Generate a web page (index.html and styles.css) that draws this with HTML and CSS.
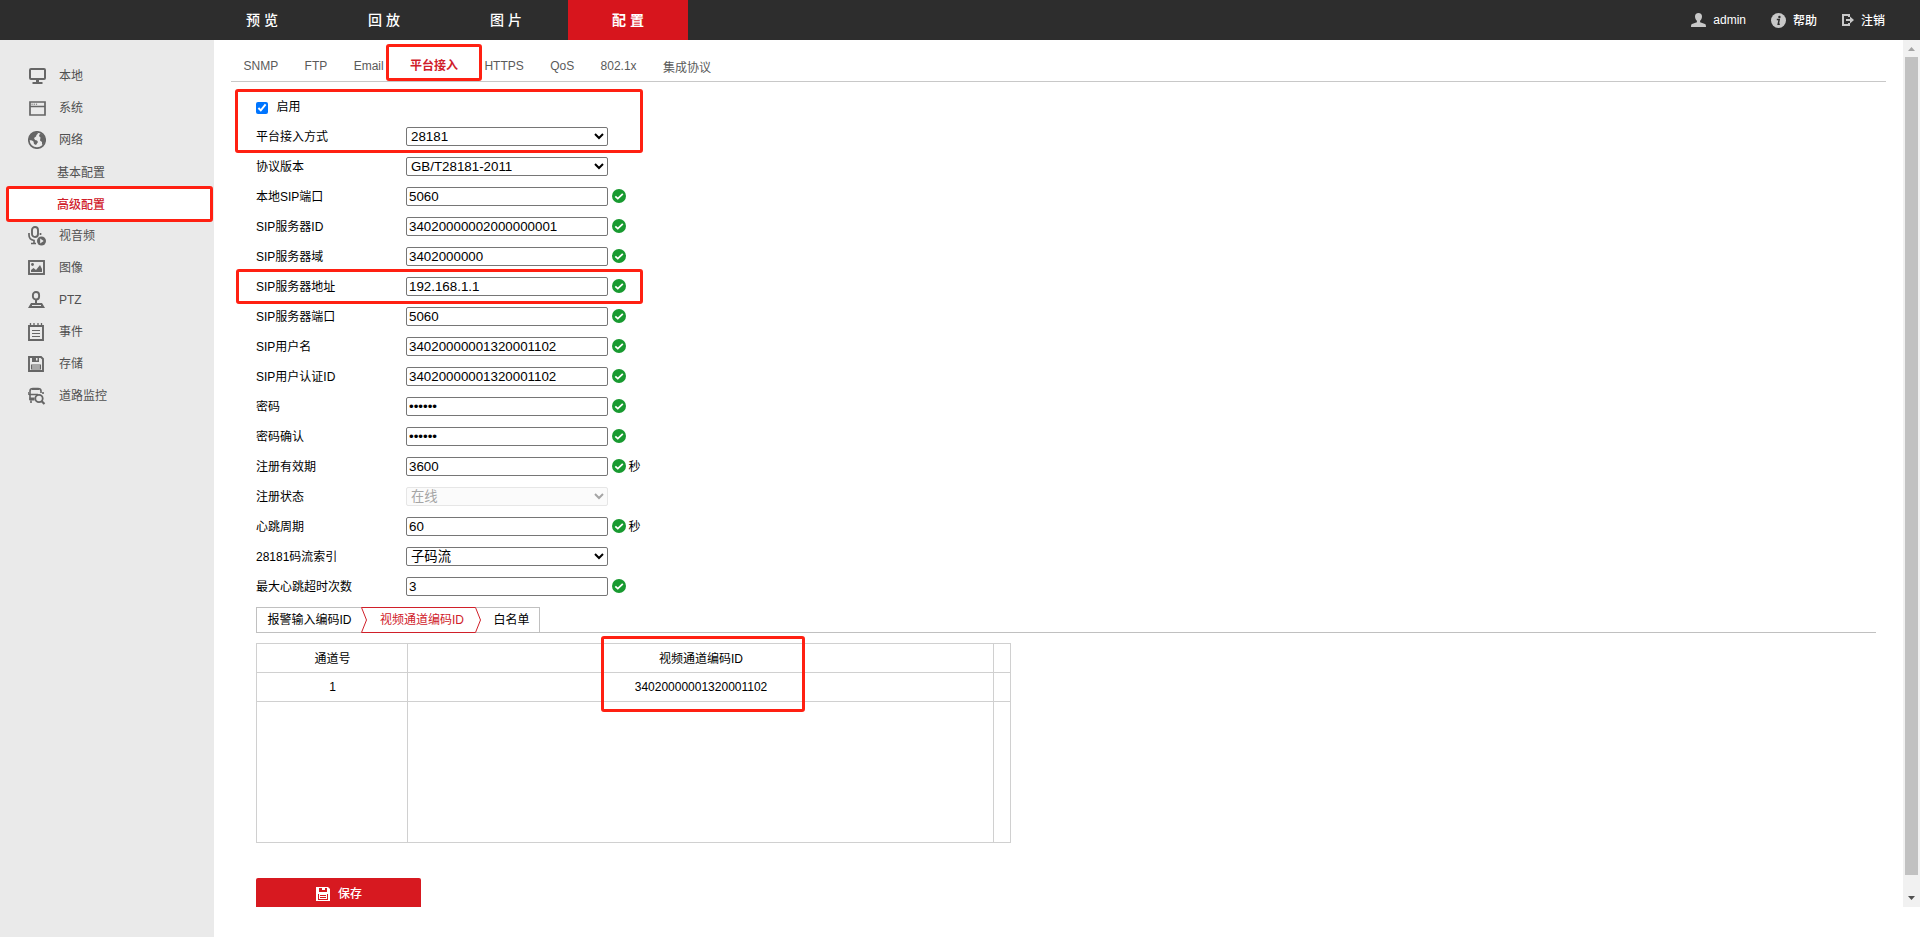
FILE: index.html
```html
<!DOCTYPE html>
<html lang="zh">
<head>
    <meta charset="UTF-8">
    <title>配置</title>
    <link rel="stylesheet" href="styles.css">
</head>
<body>
    <svg class="defs">
        <symbol id="ok" viewBox="0 0 14 14">
            <circle cx="7" cy="7" r="7" fill="#189a30"/>
            <path d="M3.3 7.300l2.500 2.300 5-4.800" fill="none" stroke="#fff" stroke-width="1.800"/>
        </symbol>
    </svg>

    <div class="header">
        <div class="nav">
            <a>预 览</a>
            <a>回 放</a>
            <a>图 片</a>
            <a class="active">配 置</a>
        </div>
        <div class="user">
            <span class="user-item">
                <svg width="15" height="14" viewBox="0 0 15 14"><path fill="#c8c8c8" d="M7.5 0C5.3 0 4 1.500 4 3.500c0 2 .8 3.300 1.900 4.300v1.400L1 11c-.7.300-1 1.200-1 3h15c0-1.800-.3-2.700-1-3L9.100 9.200V7.800C10.200 6.800 11 5.500 11 3.500 11 1.500 9.700 0 7.500 0z"/></svg>
                <span>admin</span>
            </span>
            <span class="user-item help">
                <svg width="15" height="15" viewBox="0 0 15 15"><circle cx="7.5" cy="7.500" r="7.500" fill="#c8c8c8"/><circle cx="8.400" cy="4" r="1.200" fill="#2d2d2d"/><path d="M5.800 6.600h2.400l-1 4.700h1.600" fill="none" stroke="#2d2d2d" stroke-width="1.500"/></svg>
                <span class="cn">帮助</span>
            </span>
            <span class="user-item logout">
                <svg width="12" height="12" viewBox="0 0 12 12"><path d="M7 1H1v10h6M7 0v3M7 9v3" fill="none" stroke="#c8c8c8" stroke-width="2"/><path d="M4 5h4V2.600L12 6 8 9.400V7H4z" fill="#c8c8c8"/></svg>
                <span class="cn">注销</span>
            </span>
        </div>
    </div>

    <div class="body">
        <div class="sidebar">
            <div class="menu">
                <svg viewBox="0 0 18 18"><rect x="2" y="2" width="15" height="10" rx="1" fill="none" stroke="#666" stroke-width="2"/><path d="M8 12h3v3H8zM4.500 15h10v2h-10z" fill="#666"/></svg>
                <span>本地</span>
            </div>
            <div class="menu">
                <svg viewBox="0 0 18 18"><path d="M2 3h15v13H2zM2 7.500h15" fill="none" stroke="#666" stroke-width="1.700"/><path d="M3.500 5.200h6" stroke="#666" stroke-dasharray="1.200 1"/></svg>
                <span>系统</span>
            </div>
            <div class="menu">
                <svg viewBox="0 0 18 18"><circle cx="9" cy="9" r="8.200" fill="none" stroke="#666" stroke-width="1.700"/><path fill="#666" d="M9 1C4 1 1 4.500 1 9l3 .5 1.500 1 .5 2.500 2 1 2-3-1-1.500-2-.5-1-2 2-1.500L8.500 4 10 2.500z"/><path fill="#666" d="M12 2.500l-1 2.500 1.500 1.500-.5 3 2 1.500v3c2-1 3.500-3 3.500-5S15 3 12 2.500z"/></svg>
                <span>网络</span>
            </div>
            <div class="sub">基本配置</div>
            <div class="sub active">高级配置</div>
            <div class="menu">
                <svg class="tall" viewBox="0 0 18 20"><rect x="4" y="1" width="6" height="10" rx="3" fill="none" stroke="#666" stroke-width="1.900"/><path d="M1 7v2c0 3 2 5 5 5.500V18M3 17.500h5M12.500 7v2" fill="none" stroke="#666" stroke-width="1.700"/><circle cx="13.500" cy="15" r="4.500" fill="#666"/><path d="M12.200 12.500l3.500 2.500-3.500 2.500z" fill="#eaeaea"/></svg>
                <span>视音频</span>
            </div>
            <div class="menu">
                <svg viewBox="0 0 18 18"><rect x="1" y="2" width="15" height="13" fill="none" stroke="#666" stroke-width="1.900"/><circle cx="4.500" cy="5.500" r="1.400" fill="#666"/><path d="M3 13v-2l2.500-2L8 11l4-5 2 4v3z" fill="#666"/></svg>
                <span>图像</span>
            </div>
            <div class="menu">
                <svg viewBox="0 0 18 18"><rect x="4.900" y="1" width="6.200" height="7.500" rx="3" fill="none" stroke="#666" stroke-width="1.900"/><path d="M7 9h2v3h5l3 5H0l3-5h4z" fill="#666"/><path d="M4 14.500h9" stroke="#eaeaea"/></svg>
                <span class="en">PTZ</span>
            </div>
            <div class="menu">
                <svg viewBox="0 0 18 18"><path d="M1 3h14v14H1z" fill="none" stroke="#666" stroke-width="1.900"/><path d="M2.500 0v4M6 0v4M10 0v4M13.500 0v4" stroke="#666" stroke-width="1.300"/><path d="M4 7.500h8M4 10.500h8M4 13.500h8" stroke="#666" stroke-width="1.200"/></svg>
                <span>事件</span>
            </div>
            <div class="menu">
                <svg viewBox="0 0 18 18"><path d="M1 2h12l2 2v12H1z" fill="none" stroke="#666" stroke-width="1.900"/><path d="M4 2h7v5H4z" fill="#666"/><path d="M8 3h1.500v2.500H8z" fill="#eaeaea"/><path d="M3.500 10h9v4h-9zM3.500 12h9" fill="none" stroke="#666" stroke-width="1.100"/></svg>
                <span>存储</span>
            </div>
            <div class="menu">
                <svg viewBox="0 0 18 18"><path d="M2 13V4c0-1.500 1-2.500 3-2.500h5c2 0 3 1 3 2.500v2M1 7.500h9M3 13.500v2.500M0 5v3M15 5v2" fill="none" stroke="#666" stroke-width="1.600"/><path d="M1.500 10.500h5v3h-5zM4 1h7v2H4z" fill="#666"/><circle cx="11" cy="11.500" r="3.700" fill="#eaeaea" stroke="#666" stroke-width="1.800"/><path d="M13.500 14l3 3" stroke="#666" stroke-width="2.200"/></svg>
                <span>道路监控</span>
            </div>
            <div class="mark mark-side"></div>
        </div>

        <div class="main">
            <div class="tabs">
                <a>SNMP</a>
                <a>FTP</a>
                <a>Email</a>
                <a class="active">平台接入</a>
                <a>HTTPS</a>
                <a>QoS</a>
                <a>802.1x</a>
                <a class="last">集成协议</a>
            </div>

            <div class="form">
                <label class="enable"><input type="checkbox" checked><span>启用</span></label>
                <div class="row"><span class="name">平台接入方式</span><select><option>28181</option></select></div>
                <div class="row"><span class="name">协议版本</span><select><option>GB/T28181-2011</option></select></div>
                <div class="row"><span class="name">本地SIP端口</span><input type="text" value="5060"><svg class="ok"><use href="#ok"/></svg></div>
                <div class="row"><span class="name">SIP服务器ID</span><input type="text" value="34020000002000000001"><svg class="ok"><use href="#ok"/></svg></div>
                <div class="row"><span class="name">SIP服务器域</span><input type="text" value="3402000000"><svg class="ok"><use href="#ok"/></svg></div>
                <div class="row"><span class="name">SIP服务器地址</span><input type="text" value="192.168.1.1"><svg class="ok"><use href="#ok"/></svg></div>
                <div class="row"><span class="name">SIP服务器端口</span><input type="text" value="5060"><svg class="ok"><use href="#ok"/></svg></div>
                <div class="row"><span class="name">SIP用户名</span><input type="text" value="34020000001320001102"><svg class="ok"><use href="#ok"/></svg></div>
                <div class="row"><span class="name">SIP用户认证ID</span><input type="text" value="34020000001320001102"><svg class="ok"><use href="#ok"/></svg></div>
                <div class="row"><span class="name">密码</span><input type="password" value="123456"><svg class="ok"><use href="#ok"/></svg></div>
                <div class="row"><span class="name">密码确认</span><input type="password" value="123456"><svg class="ok"><use href="#ok"/></svg></div>
                <div class="row"><span class="name">注册有效期</span><input type="text" value="3600"><svg class="ok"><use href="#ok"/></svg><span class="unit">秒</span></div>
                <div class="row"><span class="name">注册状态</span><select disabled><option>在线</option></select></div>
                <div class="row"><span class="name">心跳周期</span><input type="text" value="60"><svg class="ok"><use href="#ok"/></svg><span class="unit">秒</span></div>
                <div class="row"><span class="name">28181码流索引</span><select><option>子码流</option></select></div>
                <div class="row"><span class="name">最大心跳超时次数</span><input type="text" value="3"><svg class="ok"><use href="#ok"/></svg></div>

                <div class="steps">
                    <div class="steps-box">
                        <span class="step">报警输入编码ID</span>
                        <span class="step active">
                            <svg width="120" height="26" viewBox="0 0 120 26"><path d="M.5.5H114.500L119.500 13 114.500 25.500H.5L5.500 13z" fill="#fff" stroke="#d0202a"/></svg>
                            <span>视频通道编码ID</span>
                        </span>
                        <span class="step">白名单</span>
                    </div>
                </div>

                <table class="grid">
                    <tr class="head"><td class="c1">通道号</td><td class="c2">视频通道编码ID</td><td class="c3"></td></tr>
                    <tr><td>1</td><td>34020000001320001102</td><td></td></tr>
                    <tr class="blank"><td></td><td></td><td></td></tr>
                </table>

                <button class="save" type="button">
                    <svg width="14" height="14" viewBox="0 0 14 14"><path fill="#fff" d="M0 0h12l2 2v12H0z"/><path fill="#d71920" d="M3 1h3v2h3V1h2v4H3zM2 7h10v6H2z"/><path fill="#fff" d="M3 7h8v5H3z"/><path d="M4 8.500h6M4 10.500h6" stroke="#d71920"/></svg>
                    <span>保存</span>
                </button>
            </div>

            <div class="mark mark-tab"></div>
            <div class="mark mark-enable"></div>
            <div class="mark mark-address"></div>
            <div class="mark mark-table"></div>
        </div>

        <div class="scrollbar">
            <svg width="17" height="17"><path d="M5 11h7L8.500 7z" fill="#a3a3a3"/></svg>
            <div class="thumb"></div>
            <svg width="17" height="17"><path d="M5 6h7L8.500 10z" fill="#505050"/></svg>
        </div>
    </div>
</body>
</html>
```
FILE: styles.css
```css
body {
    margin: 0;
    height: 937px;
    overflow: hidden;
    background: #fff;
    color: #000;
    font: 12px "Liberation Sans", "Noto Sans CJK SC", sans-serif;
}
svg {
    display: block;
    flex: none;
}
.defs {
    display: none;
}

/* header */
.header {
    display: flex;
    justify-content: space-between;
    height: 40px;
    background: #2d2d2d;
    color: #fff;
}
.nav {
    display: flex;
    gap: 2px;
    padding-left: 202px;
}
.nav a {
    width: 120px;
    font-size: 14px;
    font-weight: 500;
    line-height: 40px;
    text-align: center;
}
.nav a.active {
    background: #d7151d;
    font-weight: bold;
}
.user {
    display: flex;
    padding-right: 35px;
    font-weight: 500;
}
.user-item {
    display: flex;
    align-items: center;
    gap: 7px;
}
.user-item .cn {
    padding-bottom: 2px;
}
.help {
    margin-left: 25px;
}
.logout {
    margin-left: 25px;
}

/* sidebar */
.body {
    display: flex;
    height: 897px;
}
.sidebar {
    position: relative;
    box-sizing: border-box;
    width: 214px;
    padding-top: 20px;
    background: #eaeaea;
    color: #505050;
}
.menu {
    display: flex;
    align-items: center;
    gap: 13px;
    height: 32px;
    padding-left: 28px;
}
.menu span {
    padding-bottom: 3px;
}
.menu .en {
    padding-bottom: 0;
}
.menu svg {
    width: 18px;
    height: 18px;
}
.menu svg.tall {
    height: 20px;
}
.sub {
    height: 32px;
    padding-left: 57px;
    line-height: 34px;
}
.sub.active {
    margin: 0 1px 0 6px;
    padding-left: 51px;
    background: #fff;
    color: #d0202a;
    font-weight: 500;
}

/* content */
.main {
    position: relative;
    flex: 1;
    height: 867px;
    overflow: hidden;
}
.tabs {
    display: flex;
    gap: 26.4px;
    height: 41px;
    margin: 0 17px 0 17px;
    padding-left: 12.500px;
    border-bottom: 1px solid #c8c8c8;
    color: #5a5a5a;
    line-height: 52px;
}
.tabs .active {
    color: #d0202a;
    font-weight: bold;
}
.tabs .last {
    padding-top: 2px;
}
.form {
    padding-left: 42px;
}
.enable {
    display: flex;
    align-items: center;
    height: 30px;
    padding-top: 9.500px;
}
.enable input {
    width: 12px;
    height: 12px;
    margin: 3px 8.500px 0 0;
}
.enable span {
    padding-bottom: 2px;
}
.row {
    display: flex;
    align-items: center;
    height: 30px;
}
.name {
    width: 150px;
    padding-bottom: 1.500px;
}
.row input,
.row select {
    box-sizing: border-box;
    width: 202px;
    height: 19px;
    margin: 0;
    border: 1px solid #767676;
    border-radius: 2px;
    font: 13.333px "Liberation Sans", "Noto Sans CJK SC", sans-serif;
}
.row input {
    padding: 1px 2px;
}
.row select {
    padding: 0;
    background-color: #fff;
}
.row select:disabled {
    border-color: #dcdcdc;
    background-color: #fafafa;
}
.ok {
    width: 14px;
    height: 14px;
    margin: 0 0 1px 4px;
}
.unit {
    margin-left: 2.500px;
    padding-bottom: 1.500px;
}

/* coding id steps */
.steps {
    display: flex;
    margin: 5.500px 27px 0 0;
    border-bottom: 1px solid #c0c0c0;
}
.steps-box {
    display: flex;
    box-sizing: border-box;
    width: 284px;
    height: 25px;
    border: 1px solid #c0c0c0;
    border-bottom: none;
    line-height: 25px;
}
.step {
    padding-left: 10.500px;
}
.step.active {
    display: grid;
    width: 120px;
    margin: -1px 2px 0 9.500px;
    padding: 0;
    color: #d0202a;
    line-height: 27px;
}
.step.active > * {
    grid-area: 1 / 1;
}
.step.active svg {
    height: 26px;
}
.step.active span {
    padding-left: 19px;
}

.grid {
    width: 755px;
    margin-top: 10px;
    border-collapse: collapse;
    table-layout: fixed;
    text-align: center;
}
.grid td {
    box-sizing: border-box;
    height: 29px;
    padding: 0 0 0 1px;
    border: 1px solid #d0d0d0;
}
.grid .head td {
    padding-bottom: 2px;
}
.grid .c1 {
    width: 151px;
}
.grid .c3 {
    width: 17px;
}
.grid .blank td {
    height: 141px;
}
.save {
    display: flex;
    align-items: center;
    justify-content: center;
    gap: 8px;
    width: 165px;
    height: 31px;
    margin-top: 35px;
    padding: 0 0 0 1px;
    border: none;
    border-radius: 2px;
    background: #d71920;
    color: #fff;
    font: 500 12px "Liberation Sans", "Noto Sans CJK SC", sans-serif;
}
.save span {
    padding-bottom: 2px;
}

/* red outlines */
.mark {
    position: absolute;
    box-sizing: border-box;
    border: 3px solid #ff2012;
    border-radius: 3px;
}
.mark-side {
    left: 6px;
    top: 146px;
    width: 207px;
    height: 36px;
}
.mark-tab {
    left: 172px;
    top: 4px;
    width: 96px;
    height: 37px;
}
.mark-enable {
    left: 21px;
    top: 49px;
    width: 408px;
    height: 64px;
}
.mark-address {
    left: 22px;
    top: 229px;
    width: 407px;
    height: 35px;
}
.mark-table {
    left: 387px;
    top: 596px;
    width: 204px;
    height: 76px;
}

.scrollbar {
    display: flex;
    flex-direction: column;
    width: 17px;
    height: 867px;
    background: #f1f1f1;
}
.thumb {
    height: 818px;
    margin: 0 2px 15px;
    background: #c1c1c1;
}
```
